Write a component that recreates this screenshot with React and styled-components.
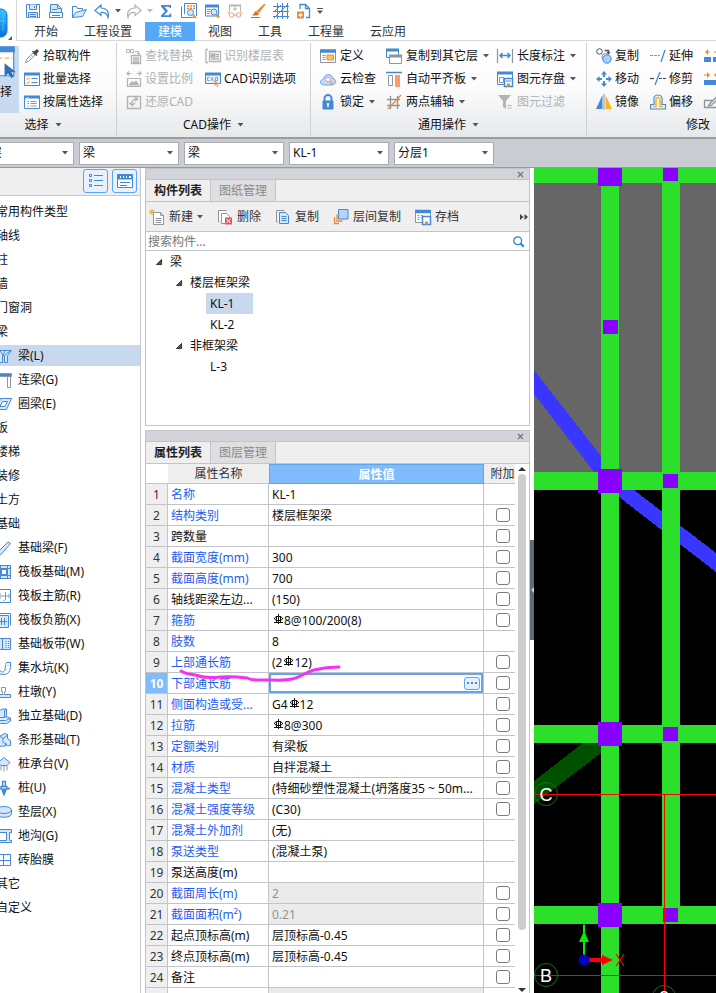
import React from "react";
import styled, { createGlobalStyle } from "styled-components";

const Global = createGlobalStyle`
  *, *::before, *::after { box-sizing: border-box; }
  body { margin: 0; background: #fff; }
  body, button, input, select {
    font-family: "Noto Sans", "Noto Sans CJK SC", sans-serif;
    font-size: 12px;
    line-height: 16px;
    color: #111;
  }
  button { border: 0; background: none; padding: 0; cursor: pointer; }
  ul { list-style: none; margin: 0; padding: 0; }
`;

/* ---------- icons ---------- */

const B = "#4389d6";
const G = "#8b979e";
const L = "#d6e7fa";
const O = "#f08a2c";
const D = "#b2b4b6";

const ICONS = {
  save: <g fill="none" stroke={B}><path d="M1.5 1.5h13v13h-13z" /><path d="M4.5 1.5v5h7v-5M3.500 14.500v-5h9v5" fill={L} /><path d="M9.500 3v2M5 11.500h6M5 13.500h6" /></g>,
  file: <g fill="none" stroke={B}><path d="M2.500 9V1.500h7l4 4V9" fill={L} /><path d="M9.500 1.500v4h4M1.500 9.500h13v5h-13zM4 6.500h5M4 12.500h8" /></g>,
  open: <g fill={L} stroke={B}><path d="M1.500 14.500v-11h4l1 2h5v3" fill="none" /><path d="M1.500 14.500l3-5 11-3-4 7z" /></g>,
  undo: <path d="M7 2L1 7.500l6 5v-3c4-.5 6 1 7 5 1.500-5-1-9.500-7-9.500z" fill="#fff" stroke={B} strokeWidth="1.200" />,
  redo: <path d="M9 2l6 5.500-6 5v-3c-4-.5-6 1-7 5-1.500-5 1-9.500 7-9.500z" fill="#fff" stroke={D} strokeWidth="1.200" />,
  sigma: <path d="M3 2h10v3h-1.200L11 3.800H6.500L10 8l-4 4.200h5l1-1.700h1.200V14H3v-1.500L7 8.200 3 3.500z" fill={B} />,
  calc: <g fill="none" stroke={B}><path d="M3.500 11V.500h12V13M.500 3.500v11h12" fill="none" /><path d="M6 3h2M9 3h2M12 3h2M6 5.500h2M9 5.500h2M12 5.500h2" stroke={O} strokeWidth="1.500" /><circle cx="9.500" cy="9.500" r="3" fill={L} /><path d="M12 12l3 3" stroke={O} strokeWidth="2" /></g>,
  find: <g fill="none" stroke={B}><path d="M1.500 2.500h13V13h-13z" /><path d="M1 3h14" strokeWidth="3" /><path d="M3 6.500h4M3 8.500h3M3 10.500h3" stroke={G} /><circle cx="10" cy="9" r="3" fill={L} /><path d="M12 11l3 3.500" stroke={O} strokeWidth="2.400" /></g>,
  glasses: <g fill="none" stroke="#e9a181"><path d="M2.500 9V2.500h11V9" stroke={D} /><path d="M2 2.500h12" stroke={D} strokeWidth="2" /><path d="M8 4v4M6 6h4" stroke={D} /><circle cx="4.500" cy="12" r="2.300" /><circle cx="11.500" cy="12" r="2.300" /><path d="M6.800 12h2.400M2 11l-1-2M14 11l1-2" /></g>,
  brush: <g><path d="M14.500.500l1 1L9 10 6.500 8z" fill={O} /><path d="M6 8l3 2.500c-1 2.500-4 2.500-7 1.500 2-.5 2-3 4-4z" fill="#e0702a" /><path d="M1 14.500h9" stroke={B} /></g>,
  grid: <g fill="none" stroke={B}><path d="M4.500 0v16M9.500 0v16M14.500 0v16M0 3.500h16M0 8.500h16M0 13.500h16" /><path d="M1 15L15 1M1 9L8 2" /></g>,
  addfile: <g fill="none" stroke={B} strokeWidth="1.300"><path d="M4 6V1.500h5.500l4 4V14.500H10M9.500 1.500v4h4" /><path d="M1 8.500h7v7H1z" fill={O} stroke="none" /><path d="M4.500 10v4M2.500 12h4" stroke="#fff" /></g>,
  picker: <g><path d="M1.500 14.500l1-3L9 5l2 2-6.500 6.500z" fill="#eef3f7" stroke={G} /><path d="M8 3.500l4.500 4.500 1-1-1-1 2.500-3-2-2-3 2.500-1-1z" fill="#3d4750" /></g>,
  batch: <g fill="none" stroke={B}><path d="M.5 2.500h15v12H.500z" fill="#fff" /><path d="M0 3h16" strokeWidth="3" /><path d="M7.500 7.500h6M7.500 11.500h6" /><path d="M2.500 7.500l1 1 2-2M2.500 11.500l1 1 2-2" stroke={O} /></g>,
  attr: <g fill="none" stroke={B}><path d="M.5 2.500h15v12H.500z" fill="#fff" /><path d="M0 3h16" strokeWidth="3" /><path d="M2 3.500l1.500 1.500L5 3.500z" fill="#fff" stroke="none" /><path d="M6.500 7.500h6M6.500 9.500h6M6.500 12h6M3.500 7.500h1.500M3.500 9.500h1.500M3.500 12h1.500" stroke={G} /></g>,
  replace: <g fill="none" stroke={D}><path d="M.500 1.500h3v3h-3zM4.500 1.500h3v3h-3zM9 3.500h3.500V6M11 5l1.500 1.500L14 5" /><path d="M5.500 7.500h9v8h-9zM7 10h6M7 12h6M7 14h6" strokeWidth="1.400" /></g>,
  scale: <g fill="none" stroke={D}><path d="M1.500 7.500h13v8h-13zM1 2.500h4.500M3 .500l-2 2 2 2M15 2.500h-4.500M13 .500l2 2-2 2" strokeWidth="1.200" /><path d="M3 14l3-3.500 2 1.500 2-2 3 4z" fill={D} /></g>,
  restore: <g fill="none" stroke={D} strokeWidth="1.400"><path d="M1.500 2.500h13v12h-13z" /><path d="M3.500 8.500l2.500 3 3-2.500M6 11c-.5-4 1-6 5-6M9 3l2.500 2L9 7.500" /></g>,
  floorTable: <g fill="none" stroke={D} strokeWidth="1.300"><path d="M4.500 3.500h11v10h-11zM3 1.500h-2v13h2" /><path d="M6 6h4v3H6z" fill={D} /><path d="M11 6.500h3M11 8.500h3M6 11h8" /></g>,
  cad: <g fill="none" stroke={B}><path d="M.5 2.500h15v10H.500z" fill="#eaf3fd" /><path d="M0 3h16" strokeWidth="3" /><path d="M4.500 6.500h-2v3h2M6 10l1-3.500L8.500 10M10.500 6.500v3h2v-3z" opacity=".7" /><path d="M9.500 9v6l1.500-1.500 1.500 2.500 1-.7-1.500-2.300h2z" fill="#f19062" stroke="none" /></g>,
  define: <g fill="none" stroke={G}><path d="M.5 2.500h15v12H.500z" fill="#fff" /><path d="M0 3h16" stroke={B} strokeWidth="3.500" /><path d="M7 7h6.500v5H7z" fill="#ffc06b" stroke={O} /><path d="M2.500 7.500h3M2.500 9.500h3M2.500 11.500h3" /></g>,
  cloud: <g><path d="M4 14C1.500 14 .5 12.500.5 11S2 8.200 3.500 8C4 5 6 3.500 8.500 3.500s4 2 4.200 4c2 .3 2.800 1.500 2.800 3.200S14 14 12 14z" fill="#bedcfa" stroke={B} strokeOpacity=".7" /><circle cx="8" cy="8.500" r="2.300" fill="#fff" stroke="#ef976d" /><path d="M10 10.500l3 3" stroke="#ef976d" strokeWidth="1.600" /></g>,
  lock: <g><path d="M4.500 7V4.500a3.500 3.500 0 017 0V7" fill="none" stroke={B} strokeWidth="2" /><rect x="2.500" y="6.500" width="11" height="9" rx="1" fill={B} /><path d="M8 9.500v3.500M6.800 10h2.400" stroke="#fff" strokeWidth="1.500" /></g>,
  copyLayer: <g fill="none" stroke={B}><path d="M.5 1.500h12v8H.500z" fill="#fff" /><path d="M0 2h13" strokeWidth="3" /><path d="M3.500 7.500h12v8h-12z" fill="#fff" stroke={G} /><path d="M3 8h13" stroke={G} strokeWidth="3" /></g>,
  align: <g><path d="M0 1.500h16" stroke={B} strokeWidth="1.500" /><path d="M2.500 4.500h4v10h-4z" fill="#fff" stroke={G} /><path d="M9 4h5v12H9z" fill="#ff9b6b" /></g>,
  axis: <g stroke={G} strokeWidth="1.300"><path d="M4.500 2v13M11.500 2v13M1 5.500h13M1 11.500h13" /><path d="M2 15L15 1" stroke={O} /></g>,
  length: <g fill="none" stroke={G}><path d="M.5 1v14M15.500 1v14" strokeWidth="1.200" /><path d="M3 7.500h10M5.500 5L3 7.500 5.500 10M10.500 5L13 7.500 10.500 10" stroke={B} strokeWidth="1.500" /></g>,
  store: <g fill="none" stroke={B}><path d="M.5 1.500h15v12H.500z" fill="#fff" /><path d="M0 2h16" strokeWidth="3" /><path d="M2.500 6.500h4v5h-4z" stroke={G} /><path d="M7.500 7.500h8v8h-8z" fill="#fff" strokeWidth="1.500" /><path d="M10 12.500h3v3h-3z" fill={O} stroke="none" /><path d="M9 10h5" /></g>,
  filter: <g fill={D}><path d="M1 1h13l-5 6v8l-3-2V7z" /><path d="M10.500 11h4v1h-4zM10.500 13.500h4v1h-4z" /></g>,
  copy2: <g fill="none" stroke="#4d5960"><circle cx="3.500" cy="3.500" r="2.800" /><path d="M8.500 2.500h4V5M11 4l1.500 1.500L14 4" strokeWidth="1.300" /><circle cx="9.500" cy="9" r="3.500" stroke={G} fill="#fff" /><circle cx="11" cy="11" r="4.200" fill="#a5d4fb" stroke={B} /></g>,
  move: <g fill={B}><path d="M8 0l3 3.500H9V6H7V3.500H5zM8 16l3-3.500H9V10H7v2.500H5zM0 8l3.500-3v2H6v2H3.500v2zM16 8l-3.500-3v2H10v2h2.500v2z" /></g>,
  mirror: <g><path d="M6.500 1v14H0z" fill={B} /><path d="M9.500 1v14H16z" fill="#ffb21a" /><path d="M8 0v16" stroke={G} /></g>,
  extend: <g fill="none" stroke={G}><path d="M0 7.500h10" strokeDasharray="3 1" /><path d="M15 2l-4 12" stroke={B} strokeWidth="1.300" /></g>,
  trim: <g fill="none" stroke="#31475c"><path d="M0 7.500h4" strokeWidth="1.200" /><path d="M10 1L5 14" stroke={B} strokeWidth="1.300" /><path d="M9 7.500h7" strokeDasharray="3 1" /></g>,
  offset: <g fill="none"><path d="M.700 15V10.500H4V7C3 3 5 1 8 1s5 2 4 6v3.500h3.500V15z" stroke={B} strokeWidth="1.200" /><path d="M3 12.500h3V6.500c-.5-2 .500-3 2-3s2.500 1 2 3v6h3" stroke="#ffb21a" strokeWidth="1.500" /></g>,
  breakIt: <g><path d="M4 1L1 4l3 3zM12 1l3 3-3 3z" fill={O} /><path d="M4 3.500h2v1H4zM10 3.500h2v1h-2z" fill={O} /><path d="M0 9h7v5H0zM9 9h7v5H9z" fill={B} /></g>,
  merge: <g><path d="M3 1l3 3-3 3zM13 1l-3 3 3 3z" fill={O} /><path d="M0 3.500h4v1H0zM12 3.500h4v1h-4z" fill={O} /><path d="M0 9h16v5H0z" fill={B} /></g>,
  pencil: <g fill="none" stroke={G} strokeWidth="1.300"><path d="M10 6.500H.500v7h15V9" /><path d="M5 10.500l8-8 2 2-8 7-2.500.5z" fill="#eee" /></g>,
  newFile: <g fill="none" stroke={G}><path d="M4.500 3.500h7l3 3v9h-10z" fill="#fff" /><path d="M11.500 3.500v3h3M6.500 9.500h6M6.500 11.500h6M6.500 13.500h6" /><path d="M3 0v6M0 3h6M1 1l4 4M5 1L1 5" stroke="#f2a33a" /></g>,
  del: <g fill="none" stroke={G}><path d="M2.500 13h-1V1.500h8M4.500 4.500h5l3 3v7h-8z" fill="#fff" /><path d="M8 8.500h7v7H8z" fill="#e05a5a" stroke="none" /><path d="M9.500 10l4 4M13.500 10l-4 4" stroke="#fff" /></g>,
  copy: <g fill="none" stroke={G}><path d="M2.500 13h-1V1.500h8" /><path d="M4.500 3.500h6l3 3v8h-9z" fill={L} stroke={B} /><path d="M6.500 7.500h5M6.500 9.500h5M6.500 11.500h5" stroke={B} /></g>,
  layers: <g fill="none" stroke={O} strokeWidth="1.300"><path d="M1.500 8v6.500H6M4 5.500V12h5.500" /><path d="M5.500 .500h9.500v9.500H5.500z" fill="#b5d5fb" stroke={B} strokeWidth="1" /></g>,
  archive: <g fill="none" stroke={G}><path d="M.5 1.500h15v12H.500z" fill="#fff" /><path d="M0 2.500h16" stroke={B} strokeWidth="3.500" /><path d="M2.500 6.500h2M6 6.500h2M2.500 8.500h2M6 8.500h2M2.500 10.500h2" /><path d="M7.500 7.500h8v8h-8z" fill="#fff" stroke={B} strokeWidth="1.500" /><path d="M10 12.500h3v3h-3z" fill={O} stroke="none" /></g>,
  search: <g fill="none" stroke="#2587c8"><circle cx="7" cy="7" r="4.800" strokeWidth="1.600" /><path d="M10.500 10.500l4 4" strokeWidth="2.600" /></g>,
  listView: <g fill="none" stroke={B}><path d="M1.500 1.500h2v2h-2zM1.500 6.500h2v2h-2zM1.500 11.500h2v2h-2zM6 2.500h9M6 7.500h9M6 12.500h9" /></g>,
  cardView: <g fill="none" stroke={B}><path d="M.5 1.500h15v13H.500z" fill="#fff" /><path d="M0 4h16" strokeWidth="5" /><path d="M3 4h1M6 4h1M9 4h1M12 4h2" stroke="#fff" strokeWidth="2" /><path d="M3 9.500h10M3 12.500h7" /></g>,
  beam: <g fill={L} stroke={B}><path d="M1.500 2.500h14l-4 5v7h-3v-7h-2v7h-3v-6" /><path d="M4 2.500l3 5M9 2.500l-2 5M14 3l-5 4" /></g>,
  linkBeam: <g stroke={G} fill="#fff"><path d="M.5 4.500h3v11h-3zM11.500 4.500h3v11h-3z" /><path d="M.5 1.500h15v3H.500z" fill={B} /></g>,
  ring: <g stroke={B} fill={L}><path d="M4.500 2.500h11l-5 11H.500z" /><path d="M6.500 5.500h5l-2.500 5H4z" fill="#fff" /></g>,
  slope: <path d="M1 13L12 2l2.500 1.500L5 14.500z" fill={L} stroke={B} />,
  raft: <g fill="none" stroke={B}><path d="M.5 1.500h14v13H.500zM4.500 1.500v13M11.500 1.500v13M.5 4.500h14M.5 11.500h14" fill={L} /><path d="M5.500 5.500h5v5h-5z" fill="#fff" /></g>,
  mainBar: <g fill="none" stroke={B}><path d="M.5 1.500h14v13H.500z" /><path d="M5 8h8M9.500 4v7c0 1-1 1.500-2 1.500M13 6v4M4 5v6" stroke={G} /></g>,
  negBar: <g fill="none" stroke={B}><path d="M.5 3.500h12v12H.500z" fill={L} /><path d="M2.500 1.500h12v12M3 9.500h8M5.500 6v7M8.500 6v7" /></g>,
  strip: <g fill={L} stroke={B}><path d="M.5 2.500h14v11H.500z" /><path d="M6.500 2.500v11" /><path d="M10 5v7M12.500 5v7" strokeDasharray="1 1" /></g>,
  pit: <g fill="none" stroke={B}><path d="M.5 8.500c3 0 4 5 7 3s1-7 3-9h4v5c-1 5-3 7-7 7s-4-2-7-2" /><path d="M3 11l1 1M12 5v1M10 9v1M7 13h1" stroke={G} /></g>,
  pier: <g fill={L} stroke={B}><path d="M.5 10.500h14v3H.500z" /><path d="M6.500 10.500v-3h-1v-4h4v4h-1v3" stroke={G} fill="#fff" /></g>,
  footing: <g fill={L} stroke={B}><path d="M.5 12.500v-3h3v-7l3-1.500h4v8l4 1v3l-4 2.500h-6zM3.500 9.500h5l2-1.500M8.500 9.500v-7l2-1M.5 12.500h9l5-2" /></g>,
  stripFoot: <g fill={L} stroke={B}><path d="M.5 14.500v-5h3v-5l5-3 3 1v4l3 2v5l-3 .5-2-3v3zM4 4.500l3 2v4l3 1M7 6.500l4-3" /></g>,
  pileCap: <g fill={L} stroke={B}><path d="M8 1.500l6 5-3 3H5l-3-3z" /><path d="M5 9.500v5M8 9.500v6M11 9.500v5" fill="none" stroke={G} /></g>,
  pile: <g fill={L} stroke={B} strokeWidth="1.300"><path d="M6.500 1.500h3v5h-3z" /><path d="M5 6.500h6v2h3L8 9.500 3 8.500h2z" /><path d="M6 10h4L8 15z" fill={B} /></g>,
  cushion: <g fill={L} stroke={B}><path d="M.5 6v3.500c0 5 15 5 15 0V6" /><ellipse cx="8" cy="6" rx="7.500" ry="3.500" /></g>,
  trench: <g fill={L} stroke={B}><path d="M1.500 1.500h14v3h-2v8h2v2h-15v-2h10v-8h-9z" /></g>,
  mould: <g fill="none" stroke={B}><path d="M.5 2.500h14v11H.500z" fill="#fff" /><path d="M7.500 2.500v11M.5 8.500h14" /></g>,
  pickBig: <g fill="none" stroke={B}><path d="M0 1h26v25H0z" fill="#fff" /><path d="M0 3h27" strokeWidth="5" /><path d="M0 10.500h25" stroke="#f2a33a" strokeDasharray="4 2" /><path d="M18 15v12l3-3 3 4 2-1-2-4h4z" fill="#2f6fb5" stroke="none" /></g>,
};

const Svg = styled.svg`
  display: block;
  flex: none;
  overflow: visible;
`;
const Icon = ({ name, size = 16, box = 16 }) => (
  <Svg width={size} height={size} viewBox={`0 0 ${box} ${box}`} aria-hidden="true">{ICONS[name]}</Svg>
);
const Caret = ({ color = "#555", size = 6 }) => (
  <Svg width={size} height="4" viewBox="0 0 6 4" aria-hidden="true"><path d="M0 0h6L3 3.500z" fill={color} /></Svg>
);

/* ---------- shell ---------- */

const Shell = styled.div`
  display: flex;
  flex-direction: column;
  height: 100vh;
  overflow: hidden;
`;

const TopBar = styled.header`
  display: flex;
  flex: none;
  height: 41px;
  overflow: hidden;
`;
const AppButton = styled.button`
  display: flex;
  align-items: center;
  justify-content: flex-end;
  width: 17px;
  flex: none;
  overflow: hidden;
  border-right: 1px solid #d5d7d9;
`;
const TopStack = styled.div`
  flex: 1;
  min-width: 0;
  border-bottom: 1px solid #d5d7d9;
`;
const QuickBar = styled.div`
  display: flex;
  align-items: center;
  height: 22px;
  padding-left: 5px;
  gap: 1px;
`;
const QuickButton = styled.button`
  display: grid;
  place-items: center;
  flex: none;
  width: ${(p) => (p.$narrow ? 8 : 22)}px;
  height: 20px;
`;
const TabBar = styled.nav`
  display: flex;
  padding-left: 4px;
`;
const RibbonTab = styled.button`
  height: 19px;
  padding: 0 13px;
  white-space: nowrap;
  color: ${(p) => (p.$active ? "#fff" : "#333")};
  background: ${(p) => (p.$active ? "#58a6f6" : "transparent")};
`;

/* ---------- ribbon ---------- */

const Ribbon = styled.section`
  display: flex;
  flex: none;
  height: 98px;
  padding-top: 2px;
  overflow: hidden;
  background: linear-gradient(#fff 0%, #fbfbfb 50%, #e6e8ea 100%);
  border-bottom: 2px solid #999da2;
`;
const Group = styled.div`
  display: flex;
  flex-direction: column;
  flex: 0 0 ${(p) => p.$width}px;
  margin-left: ${(p) => (p.$clipped ? -30 : 0)}px;
  height: 93px;
  padding-top: 1px;
  border-right: 1px solid #cfd1d4;
`;
const GroupBody = styled.div`
  display: flex;
  padding-left: ${(p) => p.$indent}px;
`;
const ToolGrid = styled.div`
  display: grid;
  grid-template-rows: repeat(3, 23px);
  grid-template-columns: ${(p) => p.$columns};
  grid-auto-flow: column;
`;
const Tool = styled.button`
  display: flex;
  align-items: center;
  gap: ${(p) => (p.$tight ? 3 : 4)}px;
  white-space: nowrap;
  color: #111;
  &:disabled { color: #b0b2b4; }
`;
const ToolText = styled.span`
  margin-right: ${(p) => (p.$menu ? 1 : 0)}px;
`;
const BigTool = styled.button`
  display: flex;
  flex-direction: column;
  align-items: center;
  gap: 6px;
  width: 38px;
  height: 67px;
  margin: 2px 5px 0 0;
  background: #c8daf0;
`;
const GroupTitle = styled.button`
  display: flex;
  align-items: center;
  justify-content: center;
  gap: 6px;
  height: 25px;
`;

const TOOL_COLUMNS = {
  cad: [
    ["replace", "查找替换", 0, 1], ["scale", "设置比例", 0, 1], ["restore", "还原CAD", 0, 1],
    ["floorTable", "识别楼层表", 0, 1], ["cad", "CAD识别选项"],
  ],
  common: [
    ["define", "定义"], ["cloud", "云检查"], ["lock", "锁定", 1],
    ["copyLayer", "复制到其它层", 1], ["align", "自动平齐板", 1], ["axis", "两点辅轴", 1],
    ["length", "长度标注", 1], ["store", "图元存盘", 1], ["filter", "图元过滤", 0, 1],
  ],
  edit: [
    ["copy2", "复制"], ["move", "移动"], ["mirror", "镜像"],
    ["extend", "延伸"], ["trim", "修剪"], ["offset", "偏移"],
  ],
  select: [["picker", "拾取构件"], ["batch", "批量选择"], ["attr", "按属性选择"]],
};

const Tools = ({ items, tight }) =>
  items.map(([icon, label, menu, off]) => (
    <Tool key={label} disabled={!!off} $tight={tight}>
      <Icon name={icon} />
      <ToolText $menu={menu}>{label}</ToolText>
      {menu ? <Caret /> : null}
    </Tool>
  ));

/* ---------- selectors under the ribbon ---------- */

const ComboBar = styled.div`
  display: flex;
  flex: none;
  align-items: center;
  gap: 5px;
  height: 29px;
  margin-left: -26px;
  background: #c9ccd1;
  border-bottom: 1px solid #97999d;
`;
const ComboBox = styled.div`
  display: grid;
  grid-template-columns: 1fr 11px;
  align-items: center;
  width: 100px;
  height: 23px;
  background: #fff;
  border: 1px solid #a9abae;
`;
const ComboSelect = styled.select`
  grid-area: 1 / 1 / 2 / 3;
  appearance: none;
  width: 100%;
  height: 21px;
  padding: 0 12px 0 3px;
  border: 0;
  background: transparent;
  outline: 0;
`;
const ComboMark = styled.span`
  grid-area: 1 / 2;
  pointer-events: none;
`;
const Combo = ({ label, value }) => (
  <ComboBox>
    <ComboSelect aria-label={label} defaultValue={value}><option>{value}</option></ComboSelect>
    <ComboMark><Caret /></ComboMark>
  </ComboBox>
);

/* ---------- work area ---------- */

const Work = styled.main`
  display: flex;
  flex: 1;
  min-height: 0;
`;

const Navigator = styled.aside`
  flex: 0 0 141px;
  overflow: hidden;
  border-right: 1px solid #c5c7cc;
`;
const NavBar = styled.div`
  display: flex;
  justify-content: flex-end;
  gap: 4px;
  height: 28px;
  padding: 1px 3px 0 0;
  background: #efefef;
  border-bottom: 1px solid #c5c7cc;
`;
const ViewButton = styled.button`
  display: grid;
  place-items: center;
  width: 25px;
  height: 24px;
  background: #e8f2fd;
  border: 1px solid #58a6f6;
  border-radius: 3px;
`;
const NavList = styled.ul`
  padding-top: 5px;
`;
const NavItem = styled.li`
  height: 21px;
  margin-bottom: 3px;
  background: ${(p) => (p.$active ? "#c8d9ef" : "transparent")};
`;
const NavButton = styled.button`
  display: flex;
  align-items: center;
  gap: 6px;
  height: 21px;
  margin-left: -4px;
  white-space: nowrap;
`;

const NAV = [
  ["常用构件类型"], ["轴线"], ["柱"], ["墙"], ["门窗洞"], ["梁"],
  ["梁(L)", "beam"], ["连梁(G)", "linkBeam"], ["圈梁(E)", "ring"],
  ["板"], ["楼梯"], ["装修"], ["土方"], ["基础"],
  ["基础梁(F)", "slope"], ["筏板基础(M)", "raft"], ["筏板主筋(R)", "mainBar"], ["筏板负筋(X)", "negBar"],
  ["基础板带(W)", "strip"], ["集水坑(K)", "pit"], ["柱墩(Y)", "pier"], ["独立基础(D)", "footing"],
  ["条形基础(T)", "stripFoot"], ["桩承台(V)", "pileCap"], ["桩(U)", "pile"], ["垫层(X)", "cushion"],
  ["地沟(G)", "trench"], ["砖胎膜", "mould"], ["其它"], ["自定义"],
];

const Docks = styled.div`
  display: flex;
  flex: 0 0 385px;
  flex-direction: column;
  gap: 4px;
  margin-left: 4px;
  min-width: 0;
  min-height: 0;
`;
const Dock = styled.section`
  display: flex;
  flex-direction: column;
  flex: ${(p) => (p.$fill ? "1 1 0" : "0 0 258px")};
  min-height: 0;
  overflow: hidden;
  border: 1px solid #c1c4ca;
  border-bottom-width: ${(p) => (p.$fill ? 0 : 1)}px;
`;
const DockHead = styled.div`
  display: flex;
  flex: none;
  justify-content: flex-end;
  align-items: center;
  height: 11px;
  padding-right: 5px;
  background: #d2d4d9;
  border-bottom: 1px solid #c1c4ca;
`;
const CloseButton = styled.button`
  display: grid;
  place-items: center;
  width: 7px;
  height: 7px;
`;
const DockTabs = styled.div`
  display: flex;
  flex: none;
  height: 22px;
  background: #efefef;
  border-bottom: 1px solid #c1c4ca;
`;
const DockTab = styled.button`
  width: 65px;
  border-right: 1px solid #c1c4ca;
  font-weight: ${(p) => (p.$active ? 700 : 400)};
  color: ${(p) => (p.$active ? "#222" : "#8a8a8a")};
  background: ${(p) => (p.$active ? "#efefef" : "#dfdfe0")};
`;
const DockTop = ({ active, other }) => (
  <>
    <DockHead>
      <CloseButton aria-label="关闭">
        <Svg width="7" height="7" viewBox="0 0 7 7"><path d="M1 1l5 5M6 1L1 6" stroke="#777" strokeWidth="1.300" /></Svg>
      </CloseButton>
    </DockHead>
    <DockTabs>
      <DockTab $active>{active}</DockTab>
      <DockTab>{other}</DockTab>
    </DockTabs>
  </>
);
const ListTools = styled.div`
  display: flex;
  flex: none;
  align-items: center;
  gap: 14px;
  height: 30px;
  padding: 0 0 0 3px;
  background: #efefef;
  border-bottom: 1px solid #c1c4ca;
`;
const ListTool = styled.button`
  display: flex;
  align-items: center;
  gap: 4px;
  color: #333;
  white-space: nowrap;
`;
const MoreTools = styled.button`
  margin: 0 1px 0 auto;
`;
const SearchRow = styled.label`
  display: flex;
  flex: none;
  align-items: center;
  height: 19px;
  padding: 0 4px 0 2px;
  border-bottom: 1px solid #c1c4ca;
`;
const SearchInput = styled.input`
  flex: 1;
  min-width: 0;
  height: 18px;
  padding: 0;
  border: 0;
  outline: 0;
  &::placeholder { color: #777; opacity: 1; }
`;
const Tree = styled.ul`
  flex: 1;
`;
const TreeRow = styled.li`
  display: flex;
  align-items: center;
  gap: 8px;
  height: 21px;
  padding-left: ${(p) => 10 + p.$level * 20}px;
`;
const TreeLeaf = styled.button`
  height: 21px;
  width: 47px;
  padding-left: 4px;
  text-align: left;
  background: ${(p) => (p.$active ? "#c8d9ef" : "transparent")};
`;
const TreeMark = () => (
  <Svg width="6" height="6" viewBox="0 0 7 7" aria-hidden="true"><path d="M6.500.500v6h-6z" fill="#555" stroke="#222" /></Svg>
);

/* ---------- property table ---------- */

const TableArea = styled.div`
  position: relative;
  display: flex;
  flex: 1;
  min-height: 0;
`;
const TableClip = styled.div`
  flex: 1;
  min-width: 0;
  overflow: hidden;
`;
const PropTable = styled.table`
  width: 375px;
  table-layout: fixed;
  border-collapse: separate;
  border-spacing: 0;
`;
const Th = styled.th`
  height: 20px;
  padding: 1px 0 0;
  font-weight: ${(p) => (p.$active ? 700 : 400)};
  color: ${(p) => (p.$active ? "#fff" : "#333")};
  background: ${(p) => (p.$active ? "#80bbfb" : p.$blank ? "#fff" : "#efefef")};
  border: 0 solid ${(p) => (p.$active ? "#5ea5ec" : "#c1c4ca")};
  border-width: ${(p) => (p.$active ? "1px" : "0 0 1px")};
`;
const Td = styled.td`
  height: 21px;
  padding: 2px 3px 0;
  overflow: hidden;
  white-space: nowrap;
  line-height: 18px;
  color: ${(p) => (p.$link ? "#1d5cf0" : p.$muted ? "#929292" : "#111")};
  background: ${(p) => (p.$muted ? "#ebebeb" : "#fff")};
  border: 0 solid #c1c4ca;
  border-width: 0 1px 1px 0;
`;
const NumCell = styled.th`
  height: 21px;
  padding: 2px 0 0;
  line-height: 18px;
  font-weight: ${(p) => (p.$active ? 700 : 400)};
  color: ${(p) => (p.$active ? "#fff" : "#333")};
  background: ${(p) => (p.$active ? "#80bbfb" : "#efefef")};
  border: 0 solid #c1c4ca;
  border-width: 0 1px 1px 0;
`;
const FlagCell = styled(Td)`
  padding: 0;
  border-right-width: 0;
`;
const Flag = styled.input`
  appearance: none;
  display: block;
  width: 14px;
  height: 14px;
  margin: 0 auto;
  border: 1px solid #7c7c7c;
  border-radius: 3px;
  background: #fff;
  &:checked { background: #58a6f6; }
`;
const EditTd = styled(Td)`
  padding: 0;
`;
const Editor = styled.div`
  display: flex;
  align-items: center;
  height: 20px;
  padding-right: 1px;
  border: 2px solid #62a5ea;
`;
const EditorInput = styled.input`
  flex: 1;
  min-width: 0;
  height: 16px;
  padding: 0 2px;
  border: 0;
  outline: 0;
`;
const MoreButton = styled.button`
  display: grid;
  place-items: center;
  width: 16px;
  height: 13px;
  background: #e3f0fd;
  border: 1px solid #62a5ea;
  border-radius: 3px;
`;
const Bar = styled.svg`
  display: inline-block;
  margin: 0 1px 0 2px;
  vertical-align: 1px;
`;
const Rebar = () => (
  <Bar width="9" height="10" viewBox="0 0 9 10" role="img" aria-label="三级钢">
    <path d="M4.500 0v10M0 8.500h9M2.500 2v6.500M6.500 2v6.500" stroke="#111" fill="none" />
    <path d="M2.500 2.500h4l2 1.500v1l-2 1.500h-4L.500 5V4z" stroke="#111" fill="none" />
  </Bar>
);
const GroupMark = styled.button`
  display: block;
  width: 13px;
  height: 13px;
  margin-left: 1px;
  border: 1px solid #999;
  border-radius: 3px;
  line-height: 10px;
`;
const ScrollTrack = styled.div`
  display: flex;
  flex: 0 0 14px;
  flex-direction: column;
  align-items: center;
  gap: 3px;
  padding: 3px 0 1px;
  background: #fff;
`;
const ScrollThumb = styled.div`
  flex: 0 1 456px;
  width: 8px;
  border-radius: 4px;
  background: #cdcdcd;
`;
const ScrollDown = styled.span`
  margin-top: auto;
`;
const Marker = styled.svg`
  position: absolute;
  left: 30px;
  top: 198px;
  pointer-events: none;
`;

/* name, value, hasFlag, style */
const ROWS = [
  ["名称", "KL-1", 0, "link"],
  ["结构类别", "楼层框架梁", 1, "link"],
  ["跨数量", "", 1],
  ["截面宽度(mm)", "300", 1, "link"],
  ["截面高度(mm)", "700", 1, "link"],
  ["轴线距梁左边...", "(150)", 1],
  ["箍筋", <><Rebar />8@100/200(8)</>, 1, "link"],
  ["肢数", "8", 0, "link"],
  ["上部通长筋", <>(2<Rebar />12)</>, 1, "link"],
  ["下部通长筋", null, 1, "link"],
  ["侧面构造或受...", <>G4<Rebar />12</>, 1, "link"],
  ["拉筋", <><Rebar />8@300</>, 1, "link"],
  ["定额类别", "有梁板", 1, "link"],
  ["材质", "自拌混凝土", 1, "link"],
  ["混凝土类型", "(特细砂塑性混凝土(坍落度35 ~ 50m...", 1, "link"],
  ["混凝土强度等级", "(C30)", 1, "link"],
  ["混凝土外加剂", "(无)", 0, "link"],
  ["泵送类型", "(混凝土泵)", 0, "link"],
  ["泵送高度(m)", "", 0],
  ["截面周长(m)", "2", 1, "link", 1],
  ["截面面积(m²)", "0.21", 1, "link", 1],
  ["起点顶标高(m)", "层顶标高-0.45", 1],
  ["终点顶标高(m)", "层顶标高-0.45", 1],
  ["备注", "", 1],
];

const Properties = () => (
  <TableArea>
    <TableClip>
      <PropTable>
        <colgroup><col width="22" /><col width="101" /><col width="215" /><col width="37" /></colgroup>
        <thead>
          <tr><Th $blank /><Th>属性名称</Th><Th $active>属性值</Th><Th>附加</Th></tr>
        </thead>
        <tbody>
          {ROWS.map(([name, value, flag, kind, muted], i) => (
            <tr key={name}>
              <NumCell scope="row" $active={value === null}>{i + 1}</NumCell>
              <Td $link={kind === "link"}>{name}</Td>
              {value === null ? (
                <EditTd>
                  <Editor>
                    <EditorInput aria-label={name} />
                    <MoreButton aria-label="更多">
                      <Svg width="10" height="2" viewBox="0 0 10 2"><path d="M0 0h2v2H0zM4 0h2v2H4zM8 0h2v2H8z" fill={B} /></Svg>
                    </MoreButton>
                  </Editor>
                </EditTd>
              ) : <Td $muted={muted}>{value}</Td>}
              <FlagCell>{flag ? <Flag type="checkbox" aria-label={`${name} 附加`} /> : null}</FlagCell>
            </tr>
          ))}
          <tr>
            <NumCell scope="row">25</NumCell>
            <Td><GroupMark aria-label="展开">+</GroupMark></Td>
            <Td $muted />
            <FlagCell />
          </tr>
        </tbody>
      </PropTable>
    </TableClip>
    <ScrollTrack>
      <Svg width="8" height="4" viewBox="0 0 8 4"><path d="M4 0l4 4H0z" fill="#333" /></Svg>
      <ScrollThumb />
      <ScrollDown><Svg width="8" height="4" viewBox="0 0 8 4"><path d="M0 0h8L4 4z" fill="#333" /></Svg></ScrollDown>
    </ScrollTrack>
    <Marker width="170" height="24" viewBox="0 0 170 24">
      <path d="M5 9c6 4 12 3 18 5s12 2 22 1 18 0 26 1c6 3 12 2 20 2s16 1 25-1 14-7 22-9 14-3 25-3" fill="none" stroke="#f532ee" strokeWidth="3" strokeLinecap="round" />
    </Marker>
  </TableArea>
);

/* ---------- model view ---------- */

const Splitter = styled.div`
  display: flex;
  flex: 0 0 4px;
  align-items: center;
  background: #fff;
`;
const SplitHandle = styled.button`
  display: grid;
  place-items: center;
  width: 4px;
  height: 100px;
  margin-top: 19px;
  background: #5f6b78;
`;
const Viewport = styled.section`
  flex: 1;
  min-width: 0;
  overflow: hidden;
  background: #000;
`;
const Drawing = styled.svg`
  display: block;
  width: 100%;
  height: 100%;
  font-family: "Liberation Sans", sans-serif;
`;
const BEAM = "#2bdf2b";
const COL = "#8800ff";
const Model = () => (
  <Drawing role="img" aria-label="梁平面布置">
    <rect width="100%" height="304" fill="#666" />
    <g fill="#3836ff" shapeRendering="crispEdges">
      <path d="M0 202L67 288V304H60L0 226z" />
      <path d="M85 322h15l82 63v19L85 329z" />
    </g>
    <path d="M49 575h18v10L0 636v-23z" fill="#005000" shapeRendering="crispEdges" />
    <g fill={BEAM}>
      <rect width="100%" height="15" />
      <rect y="304" width="100%" height="18" />
      <rect y="557" width="100%" height="18" />
      <rect y="738" width="100%" height="18" />
      <rect x="67" width="18" height="100%" />
      <rect x="128" width="18" height="756" />
    </g>
    <g fill={COL}>
      <rect x="64" y="0" width="24" height="18" />
      <rect x="64" y="301" width="24" height="24" />
      <rect x="64" y="554" width="24" height="24" />
      <rect x="64" y="735" width="24" height="24" />
      <rect x="69" y="152" width="15" height="14" />
      <rect x="129" y="0" width="15" height="13" />
      <rect x="129" y="306" width="15" height="14" />
      <rect x="129" y="559" width="15" height="14" />
      <rect x="129" y="740" width="15" height="14" />
    </g>
    <g fill="red">
      <rect x="1" y="626" width="100%" height="1" />
      <rect x="1" y="807" width="100%" height="1" />
      <rect x="130" y="626" width="1" height="100%" />
    </g>
    <g fill="none" stroke="#087a08">
      <circle cx="12" cy="626" r="11.500" />
      <circle cx="12" cy="807" r="11.500" />
      <circle cx="130" cy="829" r="11.500" />
    </g>
    <g fill="#fff" fontSize="18" textAnchor="middle">
      <text x="12" y="633">C</text>
      <text x="12" y="814">B</text>
      <text x="130" y="836">2</text>
    </g>
    <path d="M49 757h2v33h-2zM50 763l5 11H45z" fill="#00f000" />
    <path d="M46 751l4 4 4-4M50 755v4" fill="none" stroke="#00f000" />
    <path d="M52 790h18v4H52zM68 787l11 5-11 5z" fill="#f00" />
    <path d="M82 786l8 12M90 786l-8 12" stroke="#f00" strokeWidth="1.200" />
    <circle cx="50" cy="792" r="5.500" fill="#0000c0" />
  </Drawing>
);

/* ---------- page ---------- */

const QUICK = [
  ["save", "保存"], ["file", "新建"], ["open", "打开"], ["undo", "撤销", "#555"], ["redo", "恢复", "#bbb"],
  ["sigma", "汇总计算"], ["calc", "查看工程量"], ["find", "查找"], ["glasses", "查看钢筋"],
  ["brush", "格式刷"], ["grid", "轴网"], ["addfile", "导入"],
];

export default function App() {
  return (
    <Shell>
      <Global />
      <TopBar>
        <AppButton aria-label="应用菜单">
          <Svg width="40" height="40" viewBox="0 0 40 40">
            <defs>
              <linearGradient id="app" x1="0" y1="0" x2="0" y2="1">
                <stop offset="0" stopColor="#35c4ff" /><stop offset="1" stopColor="#0a6fd6" />
              </linearGradient>
            </defs>
            <rect x="0" y="8" width="31" height="28" rx="6" fill="url(#app)" stroke="#0b7be0" />
            <path d="M27 12v18M20 20h10" stroke="#5fd2ff" strokeOpacity=".6" />
            <path d="M36 35v4h-4z" fill="#555" />
          </Svg>
        </AppButton>
        <TopStack>
          <QuickBar>
            {QUICK.map(([icon, label, menu]) => (
              <React.Fragment key={label}>
                <QuickButton aria-label={label}><Icon name={icon} /></QuickButton>
                {menu ? <QuickButton $narrow aria-label={`${label}列表`}><Caret color={menu} /></QuickButton> : null}
              </React.Fragment>
            ))}
            <QuickButton $narrow aria-label="自定义工具栏">
              <Svg width="6" height="6" viewBox="0 0 6 6"><path d="M0 0h6v1H0zM0 2.500h6L3 6z" fill="#555" /></Svg>
            </QuickButton>
          </QuickBar>
          <TabBar>
            {["开始", "工程设置", "建模", "视图", "工具", "工程量", "云应用"].map((t) => (
              <RibbonTab key={t} $active={t === "建模"}>{t}</RibbonTab>
            ))}
          </TabBar>
        </TopStack>
      </TopBar>

      <Ribbon>
        <Group $width={147} $clipped>
          <GroupBody $indent={11}>
            <BigTool>
              <Icon name="pickBig" size={32} box={28} />
              选择
            </BigTool>
            <ToolGrid $columns="auto"><Tools items={TOOL_COLUMNS.select} tight /></ToolGrid>
          </GroupBody>
          <GroupTitle>选择 <Caret size={7} /></GroupTitle>
        </Group>
        <Group $width={194}>
          <GroupBody $indent={9}>
            <ToolGrid $columns="79px auto"><Tools items={TOOL_COLUMNS.cad} tight /></ToolGrid>
          </GroupBody>
          <GroupTitle>CAD操作 <Caret size={7} /></GroupTitle>
        </Group>
        <Group $width={276}>
          <GroupBody $indent={9}>
            <ToolGrid $columns="66px 111px auto"><Tools items={TOOL_COLUMNS.common} /></ToolGrid>
          </GroupBody>
          <GroupTitle>通用操作 <Caret size={7} /></GroupTitle>
        </Group>
        <Group $width={236}>
          <GroupBody $indent={9}>
            <ToolGrid $columns="54px 54px 16px">
              <Tools items={TOOL_COLUMNS.edit} tight />
              <Tool aria-label="打断"><Icon name="breakIt" /></Tool>
              <Tool aria-label="合并"><Icon name="merge" /></Tool>
              <Tool aria-label="编辑"><Icon name="pencil" /></Tool>
            </ToolGrid>
          </GroupBody>
          <GroupTitle>修改 <Caret size={7} /></GroupTitle>
        </Group>
      </Ribbon>

      <ComboBar>
        <Combo label="楼层" value="首层" />
        <Combo label="构件大类" value="梁" />
        <Combo label="构件类型" value="梁" />
        <Combo label="构件" value="KL-1" />
        <Combo label="分层" value="分层1" />
      </ComboBar>

      <Work>
        <Navigator>
          <NavBar>
            <ViewButton aria-label="列表视图"><Icon name="listView" /></ViewButton>
            <ViewButton aria-label="卡片视图"><Icon name="cardView" /></ViewButton>
          </NavBar>
          <NavList>
            {NAV.map(([label, icon]) => (
              <NavItem key={label} $active={label === "梁(L)"}>
                <NavButton>{icon ? <Icon name={icon} /> : null}{label}</NavButton>
              </NavItem>
            ))}
          </NavList>
        </Navigator>

        <Docks>
          <Dock>
            <DockTop active="构件列表" other="图纸管理" />
            <ListTools>
              <ListTool><Icon name="newFile" />新建 <Caret /></ListTool>
              <ListTool><Icon name="del" />删除</ListTool>
              <ListTool><Icon name="copy" />复制</ListTool>
              <ListTool><Icon name="layers" />层间复制</ListTool>
              <ListTool><Icon name="archive" />存档</ListTool>
              <MoreTools aria-label="更多工具">
                <Svg width="8" height="6" viewBox="0 0 8 6"><path d="M0 0l3.500 3L0 6zM4.500 0L8 3 4.500 6z" fill="#444" /></Svg>
              </MoreTools>
            </ListTools>
            <SearchRow>
              <SearchInput aria-label="搜索构件" placeholder="搜索构件..." />
              <Icon name="search" size={13} />
            </SearchRow>
            <Tree>
              <TreeRow $level={0}><TreeMark />梁</TreeRow>
              <TreeRow $level={1}><TreeMark />楼层框架梁</TreeRow>
              <TreeRow $level={2.5}><TreeLeaf $active>KL-1</TreeLeaf></TreeRow>
              <TreeRow $level={2.5}><TreeLeaf>KL-2</TreeLeaf></TreeRow>
              <TreeRow $level={1}><TreeMark />非框架梁</TreeRow>
              <TreeRow $level={2.5}><TreeLeaf>L-3</TreeLeaf></TreeRow>
            </Tree>
          </Dock>
          <Dock $fill>
            <DockTop active="属性列表" other="图层管理" />
            <Properties />
          </Dock>
        </Docks>

        <Splitter>
          <SplitHandle aria-label="收起面板">
            <Svg width="3" height="6" viewBox="0 0 3 6"><path d="M3 0v6L0 3z" fill="#c9ccd1" /></Svg>
          </SplitHandle>
        </Splitter>
        <Viewport><Model /></Viewport>
      </Work>
    </Shell>
  );
}
